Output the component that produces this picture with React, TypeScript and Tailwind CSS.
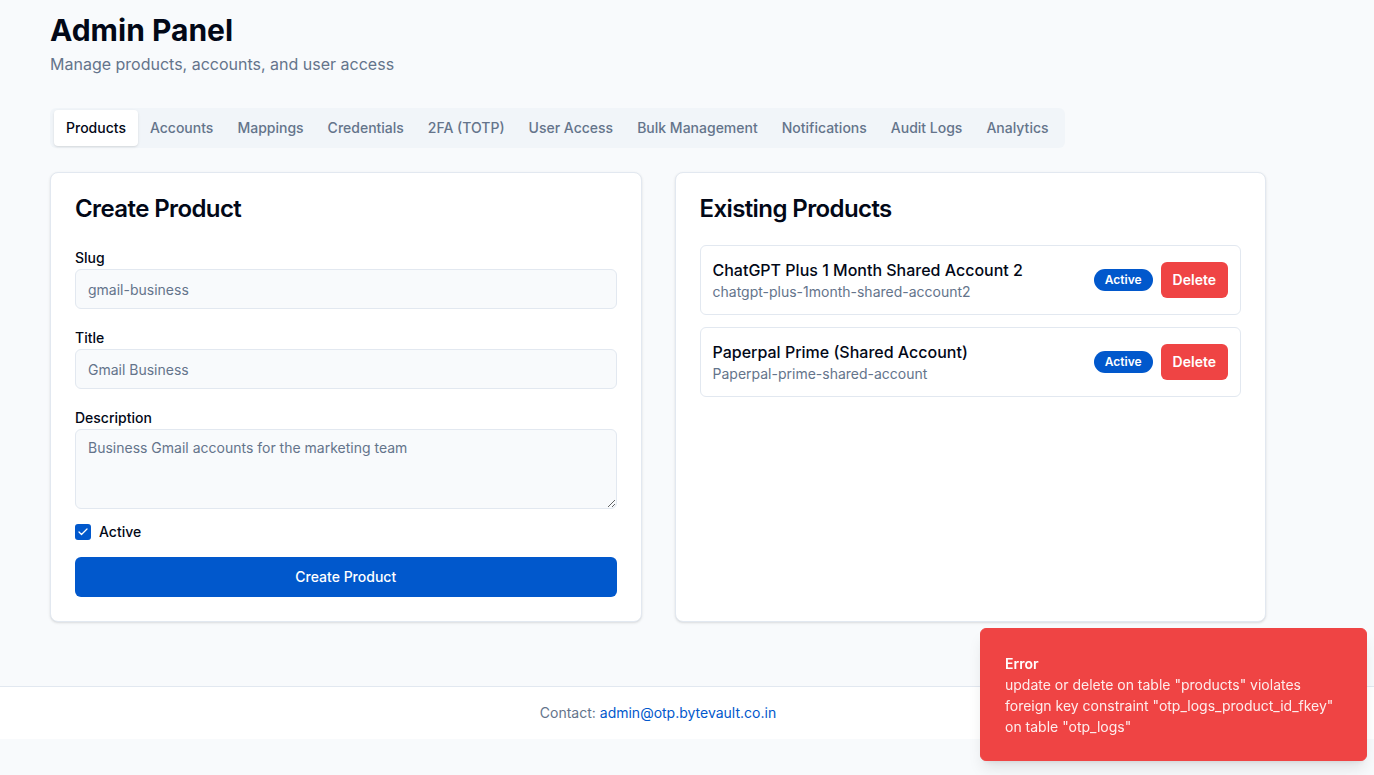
import { Check } from "lucide-react";

const tabs = [
  "Products",
  "Accounts",
  "Mappings",
  "Credentials",
  "2FA (TOTP)",
  "User Access",
  "Bulk Management",
  "Notifications",
  "Audit Logs",
  "Analytics",
];

const products = [
  { title: "ChatGPT Plus 1 Month Shared Account 2", slug: "chatgpt-plus-1month-shared-account2" },
  { title: "Paperpal Prime (Shared Account)", slug: "Paperpal-prime-shared-account" },
];

function Field({ label, placeholder }: { label: string; placeholder: string }) {
  return (
    <div>
      <label className="block text-sm font-medium leading-5 text-[#020817]">{label}</label>
      <input
        placeholder={placeholder}
        className="mt-px h-10 w-full rounded-md border border-[#e2e8f0] bg-[#f8fafc] px-3 text-sm text-[#020817] placeholder:text-[#64748b] outline-none"
      />
    </div>
  );
}

export default function App() {
  return (
    <div className="min-h-screen bg-[#f8fafc] font-['Inter',sans-serif] text-[#020817]">
      <main className="ml-[50px] w-[1216px] pt-3">
        <h1 className="text-3xl font-bold leading-9">Admin Panel</h1>
        <p className="mt-1 text-base leading-6 text-[#64748b]">Manage products, accounts, and user access</p>

        <div className="mt-8 inline-flex h-10 items-center rounded-md bg-[#f1f5f9] px-1 py-0.5">
          {tabs.map((t, i) => (
            <button
              key={t}
              type="button"
              className={`h-9 rounded-sm px-3 text-sm font-medium ${
                i === 0 ? "bg-white text-[#020817] shadow-sm" : "text-[#64748b]"
              }`}
            >
              {t}
            </button>
          ))}
        </div>

        <div className="mt-6 grid grid-cols-2 gap-[33px]">
          <section className="rounded-lg border border-[#e2e8f0] bg-white p-6 shadow-sm">
            <h2 className="text-2xl font-semibold leading-6 tracking-tight">Create Product</h2>
            <form className="mt-[27px] flex flex-col gap-[19px]" onSubmit={(e) => e.preventDefault()}>
              <Field label="Slug" placeholder="gmail-business" />
              <Field label="Title" placeholder="Gmail Business" />
              <div>
                <label className="block text-sm font-medium leading-5">Description</label>
                <textarea
                  placeholder="Business Gmail accounts for the marketing team"
                  className="mt-px block h-20 w-full rounded-md border border-[#e2e8f0] bg-[#f8fafc] px-3 py-2 text-sm text-[#020817] placeholder:text-[#64748b] outline-none"
                />
              </div>
            </form>
            <div className="mt-[15px] flex h-4 items-center gap-2">
              <span className="flex h-4 w-4 items-center justify-center rounded-[3px] bg-[#0158cc] text-white">
                <Check className="h-3 w-3" strokeWidth={2.5} />
              </span>
              <span className="text-sm font-medium leading-4">Active</span>
            </div>
            <button
              type="button"
              className="mt-[17px] h-10 w-full rounded-md bg-[#0158cc] text-sm font-medium text-white"
            >
              Create Product
            </button>
          </section>

          <section className="rounded-lg border border-[#e2e8f0] bg-white p-6 shadow-sm">
            <h2 className="text-2xl font-semibold leading-6 tracking-tight">Existing Products</h2>
            <div className="mt-6 flex flex-col gap-3">
              {products.map((p) => (
                <div
                  key={p.slug}
                  className="flex items-center justify-between rounded-md border border-[#e2e8f0] p-3"
                >
                  <div>
                    <p className="text-base font-medium leading-6">{p.title}</p>
                    <p className="text-sm leading-5 text-[#64748b]">{p.slug}</p>
                  </div>
                  <div className="flex items-center gap-2">
                    <span className="rounded-full bg-[#0158cc] px-[11px] py-0.5 text-xs font-semibold leading-[18px] text-white">
                      Active
                    </span>
                    <button
                      type="button"
                      className="h-9 rounded-md bg-[#ef4444] px-3 text-sm font-semibold text-white"
                    >
                      Delete
                    </button>
                  </div>
                </div>
              ))}
            </div>
          </section>
        </div>
      </main>

      <footer className="mt-[64px] border-t border-[#e2e8f0] bg-white">
        <div className="ml-[50px] flex h-[52px] w-[1216px] items-center justify-center text-sm text-[#64748b]">
          Contact:&nbsp;<a className="text-[#0158cc]">admin@otp.bytevault.co.in</a>
        </div>
      </footer>

      <div className="fixed bottom-[14px] right-[7px] w-[387px] rounded-md border border-[#ef4444] bg-[#ef4444] px-6 pt-[25px] pb-[23px] text-white shadow-lg">
        <p className="text-sm font-semibold leading-5">Error</p>
        <p className="text-sm leading-[21px] opacity-90">
          update or delete on table "products" violates foreign key constraint "otp_logs_product_id_fkey" on table "otp_logs"
        </p>
      </div>
    </div>
  );
}
